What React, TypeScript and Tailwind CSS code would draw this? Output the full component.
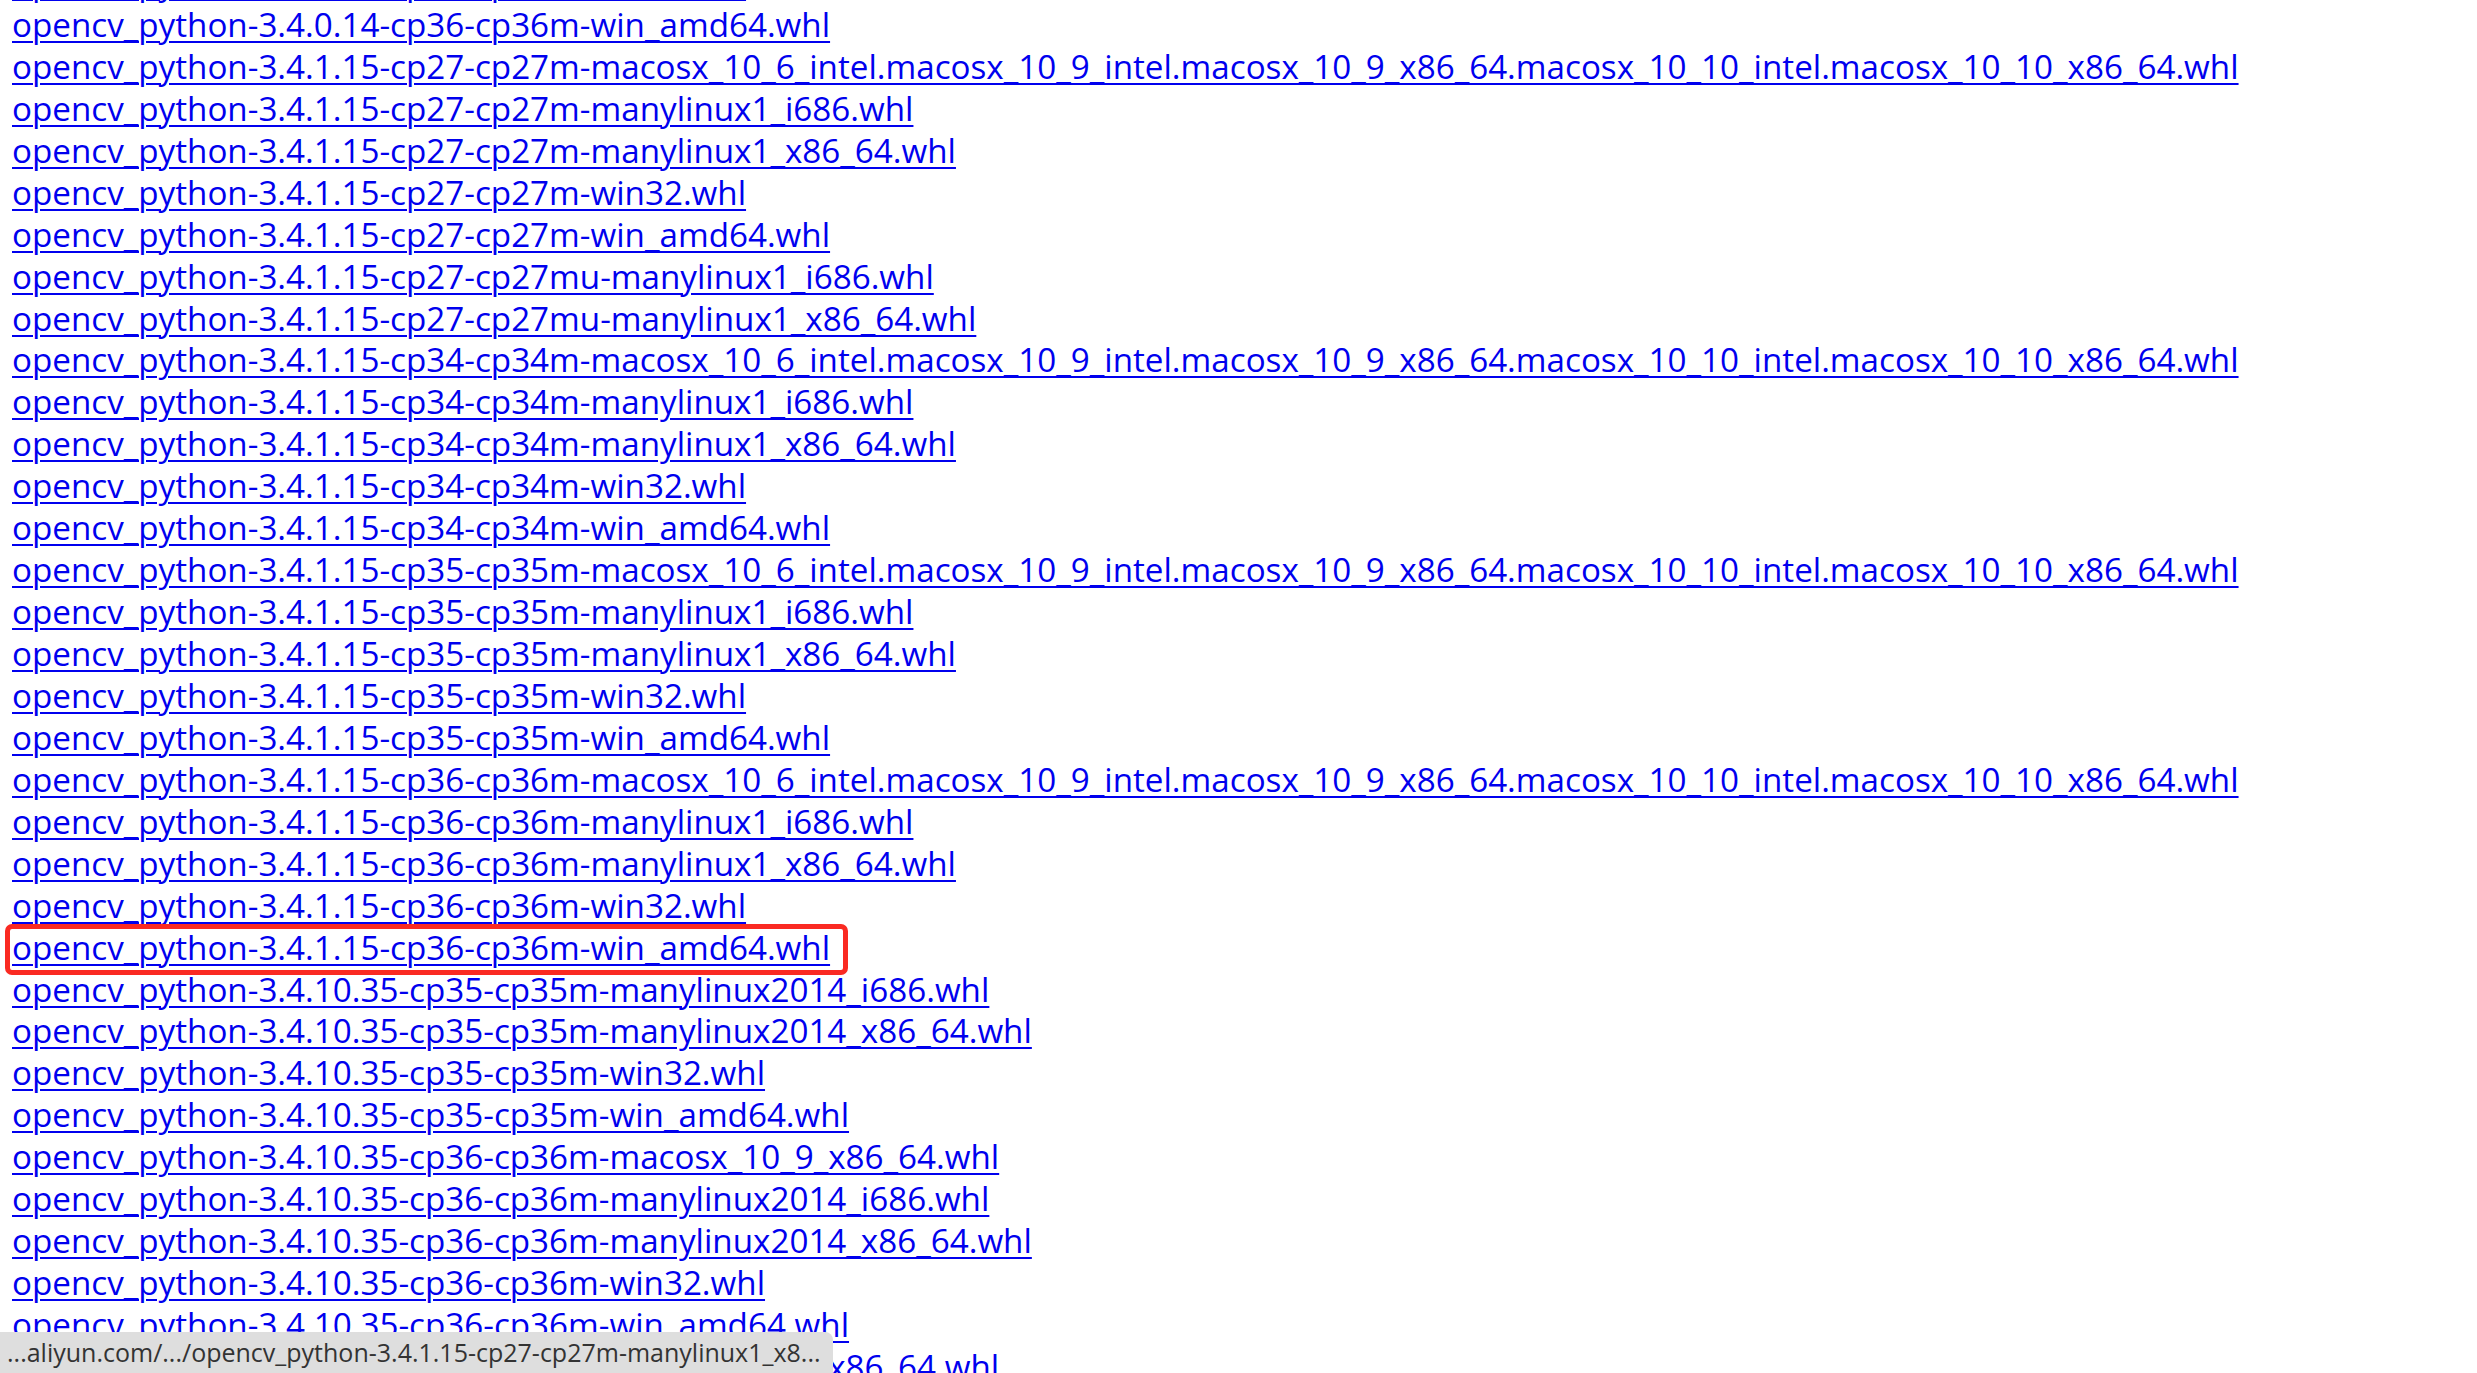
const lines = [
  'opencv_python-3.4.0.14-cp36-cp36m-win32.whl',
  'opencv_python-3.4.0.14-cp36-cp36m-win_amd64.whl',
  'opencv_python-3.4.1.15-cp27-cp27m-macosx_10_6_intel.macosx_10_9_intel.macosx_10_9_x86_64.macosx_10_10_intel.macosx_10_10_x86_64.whl',
  'opencv_python-3.4.1.15-cp27-cp27m-manylinux1_i686.whl',
  'opencv_python-3.4.1.15-cp27-cp27m-manylinux1_x86_64.whl',
  'opencv_python-3.4.1.15-cp27-cp27m-win32.whl',
  'opencv_python-3.4.1.15-cp27-cp27m-win_amd64.whl',
  'opencv_python-3.4.1.15-cp27-cp27mu-manylinux1_i686.whl',
  'opencv_python-3.4.1.15-cp27-cp27mu-manylinux1_x86_64.whl',
  'opencv_python-3.4.1.15-cp34-cp34m-macosx_10_6_intel.macosx_10_9_intel.macosx_10_9_x86_64.macosx_10_10_intel.macosx_10_10_x86_64.whl',
  'opencv_python-3.4.1.15-cp34-cp34m-manylinux1_i686.whl',
  'opencv_python-3.4.1.15-cp34-cp34m-manylinux1_x86_64.whl',
  'opencv_python-3.4.1.15-cp34-cp34m-win32.whl',
  'opencv_python-3.4.1.15-cp34-cp34m-win_amd64.whl',
  'opencv_python-3.4.1.15-cp35-cp35m-macosx_10_6_intel.macosx_10_9_intel.macosx_10_9_x86_64.macosx_10_10_intel.macosx_10_10_x86_64.whl',
  'opencv_python-3.4.1.15-cp35-cp35m-manylinux1_i686.whl',
  'opencv_python-3.4.1.15-cp35-cp35m-manylinux1_x86_64.whl',
  'opencv_python-3.4.1.15-cp35-cp35m-win32.whl',
  'opencv_python-3.4.1.15-cp35-cp35m-win_amd64.whl',
  'opencv_python-3.4.1.15-cp36-cp36m-macosx_10_6_intel.macosx_10_9_intel.macosx_10_9_x86_64.macosx_10_10_intel.macosx_10_10_x86_64.whl',
  'opencv_python-3.4.1.15-cp36-cp36m-manylinux1_i686.whl',
  'opencv_python-3.4.1.15-cp36-cp36m-manylinux1_x86_64.whl',
  'opencv_python-3.4.1.15-cp36-cp36m-win32.whl',
  'opencv_python-3.4.1.15-cp36-cp36m-win_amd64.whl',
  'opencv_python-3.4.10.35-cp35-cp35m-manylinux2014_i686.whl',
  'opencv_python-3.4.10.35-cp35-cp35m-manylinux2014_x86_64.whl',
  'opencv_python-3.4.10.35-cp35-cp35m-win32.whl',
  'opencv_python-3.4.10.35-cp35-cp35m-win_amd64.whl',
  'opencv_python-3.4.10.35-cp36-cp36m-macosx_10_9_x86_64.whl',
  'opencv_python-3.4.10.35-cp36-cp36m-manylinux2014_i686.whl',
  'opencv_python-3.4.10.35-cp36-cp36m-manylinux2014_x86_64.whl',
  'opencv_python-3.4.10.35-cp36-cp36m-win32.whl',
  'opencv_python-3.4.10.35-cp36-cp36m-win_amd64.whl',
  'opencv_python-3.4.10.35-cp37-cp37m-macosx_10_9_x86_64.whl',
];

// the one highlighted in the screenshot
const marcado = 'opencv_python-3.4.1.15-cp36-cp36m-win_amd64.whl';

export default function App() {
  return (
    <div className="h-screen overflow-hidden bg-white" style={{ fontFamily: '"Open Sans", sans-serif' }}>
      <div className="-mt-[38px] pl-[12px] flex flex-col">
        {lines.map((nome) => (
          <div key={nome} className="h-[41.94px] leading-[41.94px] text-[33.2px] whitespace-nowrap">
            <a
              href="#"
              className={`text-[#0000ee] underline decoration-2 underline-offset-[4px] ${nome === marcado ? 'relative inline-block' : ''}`}
            >
              {nome}
              {nome === marcado && (
                <span className="absolute -left-[7px] -right-[18px] -top-[3px] -bottom-[6px] border-[5px] border-[#fa2a22] rounded-[7px] pointer-events-none" />
              )}
            </a>
          </div>
        ))}
      </div>

      {/* barra de status do navegador */}
      <div className="fixed bottom-0 left-0 w-[833px] h-[41px] bg-[#dedede] rounded-tr-lg pl-[7px] flex items-center text-[25px] text-[#333333] whitespace-nowrap">
        ...aliyun.com/.../opencv_python-3.4.1.15-cp27-cp27m-manylinux1_x8...
      </div>
    </div>
  );
}
